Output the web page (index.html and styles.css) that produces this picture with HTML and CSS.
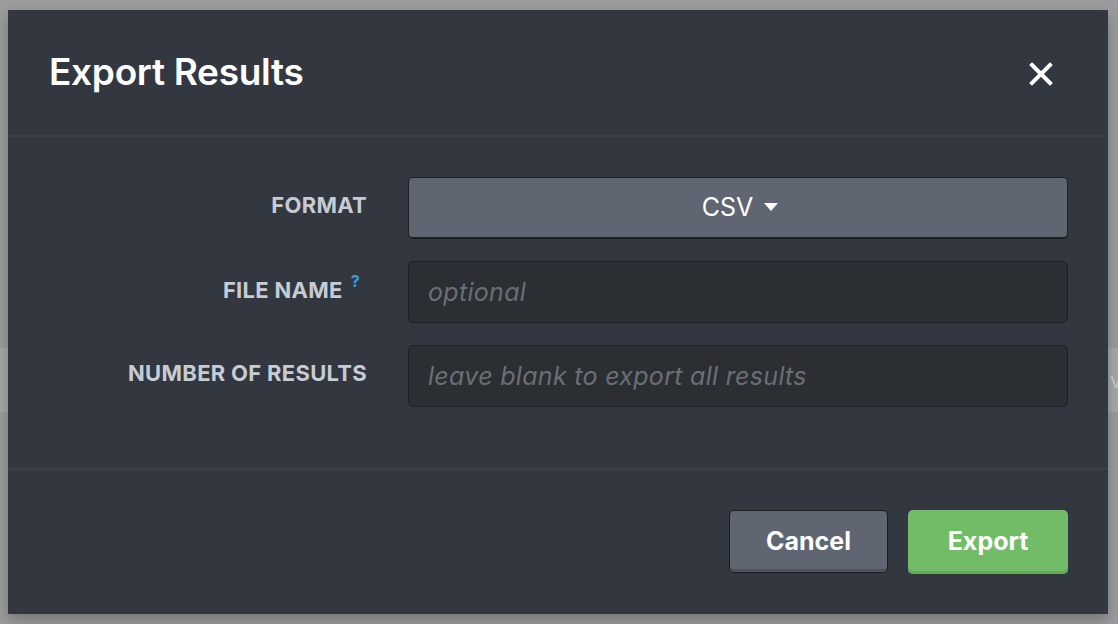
FILE: index.html
```html
<!DOCTYPE html>
<html>
<head>
<meta charset="utf-8">
<title>Export Results</title>
<link rel="stylesheet" href="styles.css">
</head>
<body>
<div class="page">
  <div class="page-band"><span class="band-text">v</span></div>
</div>
<div class="modal">
  <div class="modal-header">
    <h1 class="modal-title">Export Results</h1>
    <button class="close-btn" aria-label="Close">
      <svg width="24" height="24" viewBox="0 0 24 24"><path d="M3 3 L21 21 M21 3 L3 21" stroke="#fff" stroke-width="4" stroke-linecap="square"/></svg>
    </button>
  </div>
  <div class="modal-body">
    <div class="form-grid">
      <label class="field-label">FORMAT</label>
      <button class="select-btn">CSV <span class="caret"></span></button>
      <label class="field-label">FILE NAME<sup class="help">?</sup></label>
      <input class="text-input" type="text" placeholder="optional">
      <label class="field-label">NUMBER OF RESULTS</label>
      <input class="text-input" type="text" placeholder="leave blank to export all results">
    </div>
  </div>
  <div class="modal-footer">
    <button class="btn btn-cancel">Cancel</button>
    <button class="btn btn-export">Export</button>
  </div>
</div>
</body>
</html>
```

FILE: styles.css
```css
* { box-sizing: border-box; }
html, body { margin: 0; padding: 0; }
body {
  background: #9b9c9d;
  font-family: "Inter", "Lato", "Liberation Sans", sans-serif;
  width: 1118px;
  height: 624px;
  overflow: hidden;
}
.page { height: 624px; padding-top: 348px; }
.page-band {
  height: 64px;
  background: #a6a7a8;
  display: flex;
  justify-content: flex-end;
  align-items: center;
}
.band-text {
  color: #c8c9ca;
  font-size: 22px;
  margin-right: -4px;
}
.modal {
  position: absolute;
  left: 8px;
  top: 10px;
  width: 1100px;
  height: 604px;
  background: #33373f;
  box-shadow: 0 6px 14px rgba(0,0,0,0.25);
  display: flex;
  flex-direction: column;
}
.modal-header {
  height: 127px;
  border-bottom: 2px solid #394249;
  display: flex;
  align-items: flex-start;
  justify-content: space-between;
  padding: 0 0 0 41px;
}
.modal-title {
  margin: 40px 0 0 0;
  color: #ffffff;
  font-size: 37px;
  font-weight: 600;
  letter-spacing: -0.3px;
  line-height: 44px;
}
.close-btn {
  background: none;
  border: 0;
  padding: 0;
  margin: 52px 55px 0 0;
  width: 24px;
  height: 24px;
  cursor: pointer;
}
.close-btn svg { display: block; }
.modal-body {
  padding: 40px 40px 0 0;
  height: 333px;
  border-bottom: 2px solid #394249;
}
.form-grid {
  display: grid;
  grid-template-columns: 359px 660px;
  column-gap: 41px;
  row-gap: 22px;
  grid-auto-rows: 62px;
  align-items: center;
}
.field-label {
  text-align: right;
  color: #c6cbd4;
  font-size: 22px;
  font-weight: 700;
  letter-spacing: 0.3px;
  padding-bottom: 6px;
}
.help {
  color: #3d9de2;
  font-size: 16px;
  position: relative;
  top: -3px;
  margin-left: 8px;
  margin-right: 7px;
}
.select-btn {
  height: 62px;
  background: #5f6672;
  border: 1.5px solid #1d2024;
  border-bottom-width: 2.5px;
  border-radius: 5px;
  color: #ffffff;
  font-family: inherit;
  font-size: 25px;
  font-weight: 400;
  display: flex;
  align-items: center;
  justify-content: center;
  padding: 0 0 2px 4px;
}
.caret {
  display: inline-block;
  width: 0;
  height: 0;
  border-left: 7px solid transparent;
  border-right: 7px solid transparent;
  border-top: 8px solid #ffffff;
  margin-left: 11px;
  margin-top: 1px;
}
.text-input {
  height: 62px;
  background: #2b2e32;
  border: 1.5px solid #1d2024;
  border-radius: 5px;
  padding: 0 0 0 19px;
  color: #ffffff;
  font-family: inherit;
  font-size: 25px;
  letter-spacing: 0.3px;
  outline: none;
}
.text-input::placeholder {
  color: #6b6f75;
  font-style: italic;
}
.modal-footer {
  flex: 1;
  display: flex;
  justify-content: flex-end;
  align-items: flex-start;
  gap: 20px;
  padding: 40px 40px 0 0;
}
.btn {
  height: 64px;
  border-radius: 5px;
  font-family: inherit;
  font-size: 25px;
  font-weight: 700;
  color: #ffffff;
  padding: 0 0 2px 0;
  cursor: pointer;
}
.btn-cancel {
  width: 159px;
  height: 63px;
  background: #5f6672;
  border: 1.5px solid #1a1c1f;
  box-shadow: inset 0 -3px 0 #4e545e;
}
.btn-export {
  width: 160px;
  background: #72bb67;
  border: 0;
  box-shadow: inset 0 -3px 0 #66a85c;
}
```
